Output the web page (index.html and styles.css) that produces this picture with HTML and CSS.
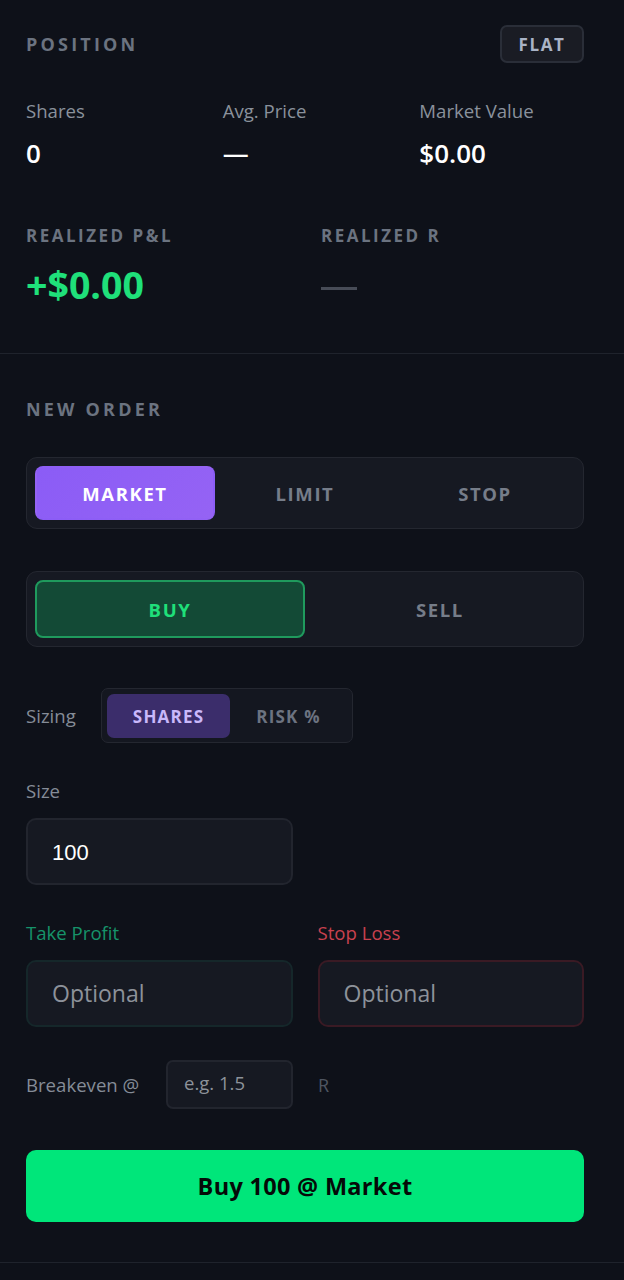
FILE: index.html
```html
<!DOCTYPE html>
<html>
<head>
<meta charset="utf-8">
<link rel="stylesheet" href="styles.css">
</head>
<body>
<div class="panel">
  <section class="section position">
    <div class="head-row">
      <h2 class="heading">POSITION</h2>
      <span class="badge">FLAT</span>
    </div>
    <div class="stats3">
      <div class="stat">
        <div class="stat-label">Shares</div>
        <div class="stat-value">0</div>
      </div>
      <div class="stat">
        <div class="stat-label">Avg. Price</div>
        <div class="stat-value">—</div>
      </div>
      <div class="stat">
        <div class="stat-label">Market Value</div>
        <div class="stat-value">$0.00</div>
      </div>
    </div>
    <div class="stats2">
      <div class="stat">
        <div class="heading small">REALIZED P&amp;L</div>
        <div class="big-value pos">+$0.00</div>
      </div>
      <div class="stat">
        <div class="heading small">REALIZED R</div>
        <div class="big-value dash"><span class="dash-bar"></span></div>
      </div>
    </div>
  </section>

  <section class="section order">
    <h2 class="heading">NEW ORDER</h2>

    <div class="seg seg-type">
      <button class="seg-btn active-purple">MARKET</button>
      <button class="seg-btn">LIMIT</button>
      <button class="seg-btn">STOP</button>
    </div>

    <div class="seg seg-side">
      <button class="seg-btn active-green">BUY</button>
      <button class="seg-btn">SELL</button>
    </div>

    <div class="sizing-row">
      <span class="field-label">Sizing</span>
      <div class="mini-seg">
        <button class="mini-btn active">SHARES</button>
        <button class="mini-btn">RISK %</button>
      </div>
    </div>

    <div class="field size-field">
      <label class="field-label">Size</label>
      <input class="input" type="text" value="100">
    </div>

    <div class="two-col">
      <div class="field">
        <label class="field-label tp">Take Profit</label>
        <input class="input input-tp" type="text" placeholder="Optional">
      </div>
      <div class="field">
        <label class="field-label sl">Stop Loss</label>
        <input class="input input-sl" type="text" placeholder="Optional">
      </div>
    </div>

    <div class="be-row">
      <span class="field-label">Breakeven @</span>
      <input class="input small-input" type="text" placeholder="e.g. 1.5">
      <span class="unit">R</span>
    </div>

    <button class="submit">Buy 100 @ Market</button>
  </section>
</div>
</body>
</html>
```

FILE: styles.css
```css
* { box-sizing: border-box; }
html, body {
  margin: 0;
  padding: 0;
  background: #0e1119;
}
body {
  font-family: "Open Sans", "Noto Sans", sans-serif;
  color: #e6e8ec;
}
.panel {
  width: 624px;
}
.section {
  padding: 0 40px 0 26px;
  border-bottom: 1px solid #1f232c;
}
.position {
  padding-top: 25px;
  padding-bottom: 46px;
}
.order {
  padding-top: 43px;
  padding-bottom: 40px;
}
.head-row {
  display: flex;
  align-items: center;
  justify-content: space-between;
  height: 38px;
}
.heading {
  margin: 0;
  font-size: 17.5px;
  font-weight: 700;
  letter-spacing: 2.7px;
  color: #6b7380;
  line-height: 24px;
}
.head-row .heading,
.order > .heading {
  font-size: 18px;
  letter-spacing: 3.2px;
}
.heading.small {
  font-size: 17px;
  letter-spacing: 2.5px;
}
.badge {
  display: flex;
  align-items: center;
  justify-content: center;
  width: 84px;
  height: 38px;
  border: 2px solid #2a2e38;
  border-radius: 7px;
  background: #1a1c24;
  color: #a9b3c6;
  font-size: 17px;
  font-weight: 700;
  letter-spacing: 1.6px;
}
.stats3 {
  display: grid;
  grid-template-columns: repeat(3, 1fr);
  column-gap: 32px;
  margin-top: 36px;
}
.stats2 {
  display: grid;
  grid-template-columns: repeat(2, 1fr);
  column-gap: 32px;
  margin-top: 55px;
}
.stat-label {
  font-size: 18.6px;
  line-height: 24px;
  color: #8a919c;
}
.stat-value {
  margin-top: 14px;
  font-size: 26px;
  line-height: 32px;
  font-weight: 600;
  color: #ffffff;
}
.big-value {
  margin-top: 15px;
  height: 44px;
  font-size: 37.5px;
  line-height: 44px;
  font-weight: 700;
  display: flex;
  align-items: center;
}
.big-value.pos { color: #1fe07a; }
.dash-bar {
  display: block;
  width: 36px;
  height: 3px;
  background: #474c57;
  margin-top: 6px;
}
.seg {
  display: grid;
  margin-top: 36px;
  padding: 8px;
  border: 1px solid #242730;
  border-radius: 11px;
  background: #161922;
}
.seg-type {
  grid-template-columns: repeat(3, 1fr);
}
.seg-side {
  grid-template-columns: repeat(2, 1fr);
  margin-top: 42px;
}
.seg-btn {
  font-family: inherit;
  border: 2px solid transparent;
  background: transparent;
  color: #767d89;
  font-size: 18.5px;
  font-weight: 700;
  letter-spacing: 1.6px;
  border-radius: 8px;
  height: 54px;
  padding: 0;
}
.seg-side .seg-btn { height: 58px; }
.active-purple {
  background: linear-gradient(135deg, #8b5cf6, #9563f4);
  color: #ffffff;
}
.active-green {
  background: #134a36;
  border-color: #1f9a5d;
  color: #1fe07a;
}
.sizing-row {
  display: flex;
  align-items: center;
  gap: 25px;
  margin-top: 41px;
}
.field-label {
  font-size: 18.6px;
  line-height: 24px;
  color: #858c97;
}
.mini-seg {
  display: flex;
  padding: 5px;
  border: 1px solid #242730;
  border-radius: 7px;
  background: #141720;
  height: 55px;
}
.mini-btn {
  font-family: inherit;
  border: none;
  background: transparent;
  color: #6c7380;
  font-size: 17px;
  font-weight: 700;
  letter-spacing: 1.2px;
  border-radius: 7px;
  padding: 0 26px;
  height: 44px;
}
.mini-btn.active {
  background: #3b2d6b;
  color: #c9b8fb;
}
.field {
  display: flex;
  flex-direction: column;
}
.size-field {
  margin-top: 36px;
  width: 267px;
}
.field .input {
  margin-top: 15px;
}
.input {
  height: 67px;
  width: 100%;
  border: 2px solid #22252e;
  border-radius: 10px;
  background: #161922;
  color: #ffffff;
  font-family: "Liberation Sans", Arial, sans-serif;
  font-size: 22px;
  padding: 3px 24px 0;
  outline: none;
}
.input::placeholder {
  font-family: "Open Sans", "Noto Sans", sans-serif;
  font-size: 23px;
  color: #8d929a;
}
.two-col {
  display: grid;
  grid-template-columns: 1fr 1fr;
  column-gap: 25px;
  margin-top: 36px;
}
.tp { color: #16936a; }
.sl { color: #c8414f; }
.input-tp { border-color: #15272a; }
.input-sl { border-color: #3a1a24; }
.be-row {
  display: flex;
  align-items: center;
  margin-top: 33px;
}
.be-row .field-label { width: 140px; }
.small-input {
  width: 127px;
  height: 49px;
  font-size: 18px;
  padding: 0 16px;
  border-radius: 7px;
}
.small-input::placeholder { font-size: 18.5px; }
.unit {
  margin-left: 25px;
  font-size: 18px;
  color: #4f5561;
}
.submit {
  display: block;
  width: 100%;
  height: 72px;
  margin-top: 41px;
  border: none;
  border-radius: 10px;
  background: #00e67a;
  color: #050a08;
  font-family: inherit;
  font-size: 23.5px;
  font-weight: 700;
  letter-spacing: 0.3px;
}
```
